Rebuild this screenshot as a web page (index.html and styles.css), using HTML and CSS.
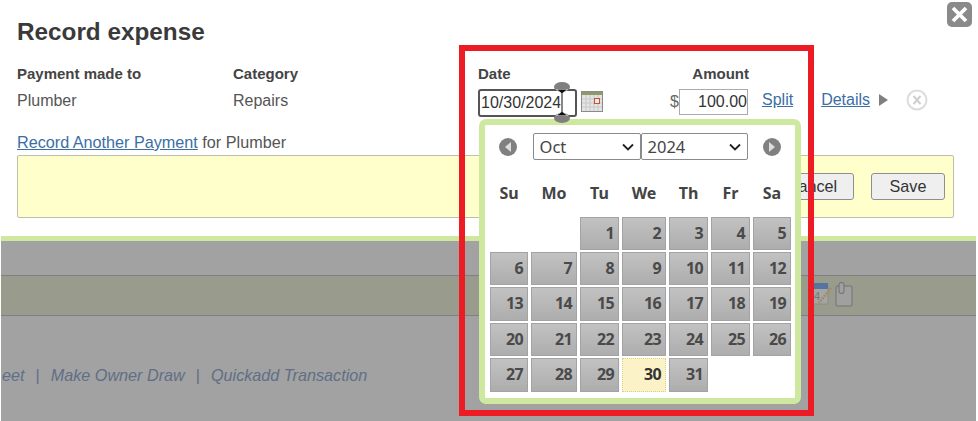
FILE: index.html

```html
<!DOCTYPE html>
<html lang="en">
<head>
  <meta charset="UTF-8">
  <title>Record expense</title>
  <link rel="stylesheet" href="styles.css">
</head>
<body>
  <div class="page">
    <div class="dialog">
      <h1>Record expense</h1>
      <div class="fields">
        <div class="field field-payee">
          <label>Payment made to</label>
          <div class="value">Plumber</div>
        </div>
        <div class="field field-category">
          <label>Category</label>
          <div class="value">Repairs</div>
        </div>
        <div class="field field-date">
          <label>Date</label>
          <div class="date-row">
            <input class="date-input" type="text" value="10/30/2024">
            <svg class="cal-icon" width="22" height="21" viewBox="0 0 22 21">
              <rect x="0.5" y="0.5" width="21" height="20" fill="#e4e4e4" stroke="#8b8b8b"/>
              <rect x="1" y="1" width="20" height="3" fill="#8d9a6a"/>
              <path d="M1 8h20M1 12h20M1 16h20M5 4v16M9 4v16M13 4v16M17 4v16" stroke="#c8c8c8" stroke-width="1"/>
              <rect x="13.500" y="7.500" width="5" height="5" fill="#f3e6d8" stroke="#b8553e"/>
            </svg>
          </div>
        </div>
        <div class="field field-amount">
          <label>Amount</label>
          <div class="amount-row">
            <span class="dollar">$</span>
            <input class="amount-input" type="text" value="100.00">
          </div>
        </div>
        <a class="link link-split" href="#">Split</a>
        <a class="link link-details" href="#">Details</a>
        <span class="arrow"></span>
        <svg class="remove-icon" width="22" height="22" viewBox="0 0 22 22">
          <circle cx="11" cy="11" r="9.500" fill="#fff" stroke="#dcdcdc" stroke-width="2"/>
          <path d="M7.500 7l7 8M14.500 7l-7 8" stroke="#cfcfcf" stroke-width="2"/>
        </svg>
      </div>
      <div class="another"><a class="link" href="#">Record Another Payment</a> for Plumber</div>
      <div class="notice">
        <button class="btn btn-cancel">Cancel</button>
        <button class="btn btn-save">Save</button>
      </div>
    </div>

    <div class="backdrop">
      <div class="olive-row">
        <svg class="edit-icon" width="20" height="24" viewBox="0 0 20 24">
          <rect x="1" y="3" width="15" height="19" fill="#a4a6a2" stroke="#8c8c8c"/>
          <rect x="1" y="1" width="15" height="6" fill="#55749f"/>
          <text x="2" y="18" class="edit-day">4</text>
          <path d="M19 6L7 21" stroke="#a38a66" stroke-width="2.500" stroke-dasharray="2 1"/>
        </svg>
        <svg class="note-icon" width="18" height="25" viewBox="0 0 18 25">
          <rect x="1" y="4" width="16" height="20" rx="2" fill="#a0a0a0" stroke="#808080" stroke-width="1.500"/>
          <rect x="4" y="0.500" width="5" height="11" rx="2.500" fill="#a0a0a0" stroke="#777" stroke-width="1.200"/>
        </svg>
      </div>
      <div class="quick-links">
        <a href="#">eet</a><span class="sep">|</span><a href="#">Make Owner Draw</a><span class="sep">|</span><a href="#">Quickadd Transaction</a>
      </div>
    </div>

    <button class="close-btn">
      <svg width="19" height="19" viewBox="0 0 19 19"><path d="M3 3l13 13M16 3L3 16" stroke="#fff" stroke-width="3.800"/></svg>
    </button>

    <!-- date picker -->
    <div class="datepicker">
      <div class="dp-head">
        <span class="dp-nav"><span class="dp-tri dp-tri-left"></span></span>
        <div class="dp-selects">
          <select class="dp-month"><option>Oct</option></select>
          <select class="dp-year"><option>2024</option></select>
        </div>
        <span class="dp-nav"><span class="dp-tri dp-tri-right"></span></span>
      </div>
      <div class="dp-grid">
        <div class="dp-dow">Su</div><div class="dp-dow">Mo</div><div class="dp-dow">Tu</div><div class="dp-dow">We</div><div class="dp-dow">Th</div><div class="dp-dow">Fr</div><div class="dp-dow">Sa</div>
        <div></div><div></div>
        <div class="day">1</div><div class="day">2</div><div class="day">3</div><div class="day">4</div><div class="day">5</div>
        <div class="day">6</div><div class="day">7</div><div class="day">8</div><div class="day">9</div><div class="day">10</div><div class="day">11</div><div class="day">12</div>
        <div class="day">13</div><div class="day">14</div><div class="day">15</div><div class="day">16</div><div class="day">17</div><div class="day">18</div><div class="day">19</div>
        <div class="day">20</div><div class="day">21</div><div class="day">22</div><div class="day">23</div><div class="day">24</div><div class="day">25</div><div class="day">26</div>
        <div class="day">27</div><div class="day">28</div><div class="day">29</div><div class="day today">30</div><div class="day">31</div>
      </div>
    </div>

    <!-- text cursor drawn over the date input -->
    <svg class="ibeam" width="18" height="42" viewBox="0 0 18 42">
      <ellipse cx="9" cy="5" rx="8" ry="5" fill="#7f7f7f"/>
      <ellipse cx="9" cy="36" rx="8" ry="5" fill="#7f7f7f"/>
      <path d="M3 7h12l-4.500 4v19l4.500 4H3l4.500-4V11z" fill="#fff"/>
      <path d="M4 7.500h10L9.500 11v19l4.500 3.500H4L8.500 30V11z" fill="#111"/>
    </svg>

    <div class="highlight"></div>
  </div>
</body>
</html>
```

FILE: styles.css

```css
* {
  box-sizing: border-box;
}
body {
  margin: 0;
  background: #fff;
  font-family: "Liberation Sans", Arial, sans-serif;
  color: #404040;
}
.page {
  position: relative;
  width: 978px;
  height: 421px;
  overflow: hidden;
}
.dialog {
  height: 236px;
  padding: 17px 24px 0 17px;
}
h1 {
  margin: 0;
  font-size: 24.3px;
  line-height: 30px;
  font-weight: bold;
  color: #3a3a3a;
}
.fields {
  display: flex;
  align-items: flex-start;
  margin-top: 18px;
  height: 64px;
}
.field label {
  display: block;
  font-size: 15px;
  font-weight: bold;
  line-height: 18px;
  color: #444;
}
.value {
  margin-top: 8px;
  font-size: 16px;
  line-height: 20px;
  color: #555;
}
.field-payee {
  width: 216px;
}
.field-category {
  width: 245px;
}
.field-date {
  width: 192px;
}
.date-row {
  display: flex;
  margin-top: 6px;
}
.date-input {
  width: 99px;
  height: 28px;
  margin: 0;
  padding: 0 1px;
  border: 2px solid #555;
  border-radius: 3px;
  background: #fff;
  font-family: inherit;
  font-size: 16px;
  color: #333;
}
.cal-icon {
  margin: 2px 0 0 4px;
}
.field-amount {
  width: 78px;
}
.field-amount label {
  text-align: right;
  margin-right: -1px;
}
.amount-row {
  display: flex;
  align-items: center;
  margin-top: 6px;
}
.dollar {
  width: 9px;
  font-size: 16px;
  color: #666;
}
.amount-input {
  width: 69px;
  height: 26px;
  margin: 0;
  padding: 0;
  border: 1px solid #aaa;
  background: #fff;
  font-family: inherit;
  font-size: 16px;
  text-align: right;
  color: #333;
}
.link {
  color: #3b6ea5;
  text-decoration: underline;
}
.link-split {
  margin: 25px 0 0 14px;
  font-size: 16px;
  line-height: 20px;
}
.link-details {
  margin: 25px 0 0 28px;
  font-size: 16px;
  line-height: 20px;
}
.arrow {
  margin: 29px 0 0 9px;
  border-left: 9px solid #7f7f7f;
  border-top: 6px solid transparent;
  border-bottom: 6px solid transparent;
}
.remove-icon {
  margin: 24px 0 0 18px;
}
.another {
  margin-top: 3px;
  font-size: 16.2px;
  line-height: 20px;
  color: #555;
}
.notice {
  display: flex;
  justify-content: flex-end;
  align-items: flex-start;
  gap: 17px;
  width: 937px;
  height: 63px;
  margin-top: 3px;
  padding: 17px 8px 0 0;
  background: #ffffcc;
  border: 1px solid #bdbdb0;
  border-radius: 2px;
}
.btn {
  height: 27px;
  padding: 0;
  background: #efefef;
  border: 1px solid #8f8f8f;
  border-radius: 3px;
  font-family: inherit;
  font-size: 16.2px;
  color: #333;
}
.btn-cancel {
  width: 84px;
}
.btn-save {
  width: 74px;
}
.backdrop {
  height: 185px;
  margin: 0 2px 0 1px;
  padding-top: 34px;
  background: #a2a2a2;
  border-top: 5px solid #cfe8a0;
}
.olive-row {
  display: flex;
  justify-content: flex-end;
  align-items: flex-start;
  gap: 3px;
  height: 41px;
  padding: 6px 123px 0 0;
  background: #999c8c;
  border-top: 1px solid #808080;
  border-bottom: 1px solid #808080;
}
.edit-day {
  font-size: 11px;
  fill: #777;
}
.quick-links {
  margin-top: 49px;
  margin-left: 1px;
  font-size: 16.2px;
  font-style: italic;
  line-height: 20px;
  white-space: nowrap;
  color: #5f6f85;
}
.quick-links a {
  color: #5f6f85;
  text-decoration: none;
}
.sep {
  margin: 0 11px;
  font-style: normal;
}
.close-btn {
  position: absolute;
  top: 2px;
  left: 947px;
  display: flex;
  align-items: center;
  justify-content: center;
  width: 25px;
  height: 25px;
  padding: 0;
  background: #8a8a8a;
  border: none;
  border-radius: 5px;
}
.datepicker {
  position: absolute;
  top: 119px;
  left: 479px;
  width: 322px;
  height: 285px;
  padding: 8px 5px 0 5px;
  background: #fff;
  border: 6px solid #cfe8a0;
  border-radius: 7px;
}
.dp-head {
  display: flex;
  align-items: center;
  justify-content: space-between;
  padding: 0 9px 0 9px;
}
.dp-nav {
  display: flex;
  align-items: center;
  justify-content: center;
  width: 18px;
  height: 18px;
  background: #808080;
  border-radius: 50%;
}
.dp-tri {
  border-top: 5px solid transparent;
  border-bottom: 5px solid transparent;
}
.dp-tri-left {
  border-right: 6px solid #ddd;
}
.dp-tri-right {
  border-left: 6px solid #ddd;
}
.dp-selects {
  display: flex;
}
.dp-selects select {
  appearance: none;
  height: 27px;
  margin: 0;
  padding: 0 0 0 6px;
  background: #fff url("data:image/svg+xml,%3Csvg xmlns='http://www.w3.org/2000/svg' width='14' height='8'%3E%3Cpath d='M2 1.500l5 5 5-5' fill='none' stroke='%23222' stroke-width='1.800'/%3E%3C/svg%3E") no-repeat right 5px center;
  border: 1px solid #8a8a8a;
  border-radius: 2px;
  font-family: "Noto Sans", sans-serif;
  font-size: 16.5px;
  color: #444;
}
.dp-month {
  width: 108px;
}
.dp-year {
  width: 107px;
}
.dp-grid {
  display: grid;
  grid-template-columns: 38px 46px 39px 44px 39px 39px 38px;
  grid-template-rows: 45px 33px 33px 34px 33px 34px;
  column-gap: 3px;
  row-gap: 2px;
  margin-top: 10px;
}
.dp-dow {
  display: flex;
  align-items: flex-start;
  justify-content: center;
  padding-top: 12px;
  font-family: "Noto Sans", sans-serif;
  font-size: 16px;
  font-weight: bold;
  color: #444;
}
.day {
  padding: 5px 4px 0 0;
  background: linear-gradient(#c2c2c2, #adadad);
  border: 1px solid #a3a3a3;
  font-family: "Noto Sans", sans-serif;
  font-size: 16px;
  font-weight: bold;
  letter-spacing: -0.6px;
  line-height: 20px;
  text-align: right;
  color: #4a4a4a;
}
.today {
  background: #fbf2c8;
  border: 1px dotted #dcd08a;
  color: #333;
}
.ibeam {
  position: absolute;
  top: 82px;
  left: 553px;
}
.highlight {
  position: absolute;
  top: 45px;
  left: 459px;
  width: 355px;
  height: 371px;
  border: 6px solid #ed1c24;
}
```
